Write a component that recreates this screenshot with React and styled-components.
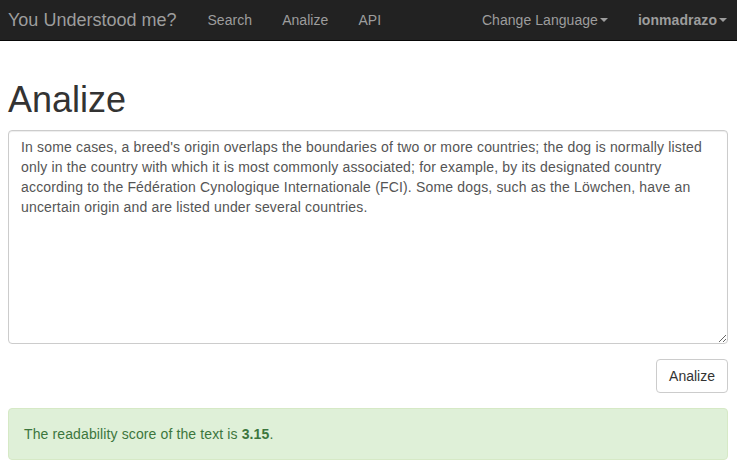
import React from "react";
import styled, { createGlobalStyle } from "styled-components";

const Global = createGlobalStyle`
  html, body { margin: 0; padding: 0; background: #fff; }
  body {
    font-family: "Liberation Sans", Arial, Helvetica, sans-serif;
    font-size: 14px;
    line-height: 20px;
    color: #333;
  }
  * { box-sizing: border-box; }
`;

const Navbar = styled.nav`
  height: 41px;
  background: #222;
  border-bottom: 1px solid #080808;
  display: flex;
  align-items: center;
  justify-content: space-between;
  padding: 0 10px 0 8px;
`;

const Left = styled.div`
  display: flex;
  align-items: center;
`;

const Brand = styled.a`
  font-size: 18px;
  line-height: 20px;
  color: #9d9d9d;
  text-decoration: none;
  margin-right: 16px;
`;

const NavLink = styled.a`
  display: flex;
  align-items: center;
  padding: 10px 15px;
  color: #9d9d9d;
  font-size: 14px;
  line-height: 20px;
  letter-spacing: 0.05px;
  text-decoration: none;
  font-weight: ${(p) => (p.$bold ? "bold" : "normal")};
  padding-right: ${(p) => (p.$last ? "0" : "15px")};
`;

const Caret = styled.span`
  display: inline-block;
  width: 0;
  height: 0;
  margin-left: 2px;
  border-top: 4px solid #9d9d9d;
  border-left: 4px solid transparent;
  border-right: 4px solid transparent;
`;

const Container = styled.main`
  padding: 0 9px 0 8px;
`;

const Title = styled.h1`
  font-size: 36px;
  font-weight: 500;
  line-height: 1.1;
  margin: 39px 0 10px;
  color: #333;
`;

const TextArea = styled.textarea`
  display: block;
  width: 100%;
  height: 214px;
  padding: 6px 12px;
  font-family: inherit;
  font-size: 14px;
  line-height: 20px;
  letter-spacing: 0.17px;
  color: #555;
  background: #fff;
  border: 1px solid #ccc;
  border-radius: 4px;
  box-shadow: inset 0 1px 1px rgba(0, 0, 0, 0.075);
  resize: vertical;
  outline: none;
`;

const Actions = styled.div`
  display: flex;
  justify-content: flex-end;
  margin: 15px 0;
`;

const Button = styled.button`
  height: 34px;
  padding: 6px 12px;
  font-family: inherit;
  font-size: 14px;
  line-height: 20px;
  color: #333;
  background: #fff;
  border: 1px solid #ccc;
  border-radius: 4px;
  cursor: pointer;
`;

const Alert = styled.div`
  padding: 15px;
  background: #dff0d8;
  border: 1px solid #d6e9c6;
  border-radius: 4px;
  color: #3c763d;
  line-height: 20px;
  letter-spacing: 0.12px;
`;

const text =
  "In some cases, a breed's origin overlaps the boundaries of two or more countries; the dog is normally listed only in the country with which it is most commonly associated; for example, by its designated country according to the Fédération Cynologique Internationale (FCI). Some dogs, such as the Löwchen, have an uncertain origin and are listed under several countries.";

export default function App() {
  return (
    <>
      <Global />
      <Navbar>
        <Left>
          <Brand href="#">You Understood me?</Brand>
          <NavLink href="#">Search</NavLink>
          <NavLink href="#">Analize</NavLink>
          <NavLink href="#">API</NavLink>
        </Left>
        <Left>
          <NavLink href="#">
            Change Language<Caret />
          </NavLink>
          <NavLink href="#" $bold $last>
            ionmadrazo<Caret />
          </NavLink>
        </Left>
      </Navbar>
      <Container>
        <Title>Analize</Title>
        <TextArea defaultValue={text} />
        <Actions>
          <Button>Analize</Button>
        </Actions>
        <Alert>
          The readability score of the text is <b>3.15</b>.
        </Alert>
      </Container>
    </>
  );
}
